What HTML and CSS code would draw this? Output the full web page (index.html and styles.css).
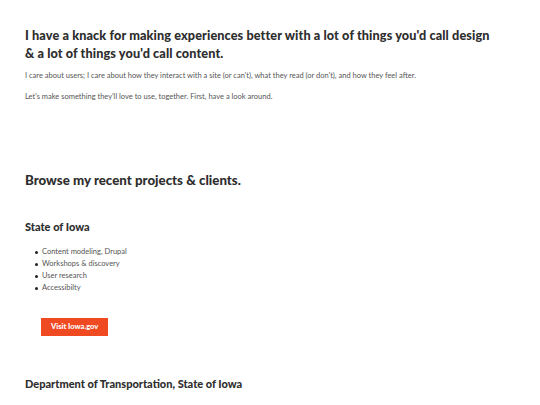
FILE: index.html
```html
<!DOCTYPE html>
<html>
<head>
<meta charset="utf-8">
<link rel="stylesheet" href="styles.css">
</head>
<body>
<main class="page">
  <section class="intro">
    <h1 class="lead">I have a knack for making experiences better with a lot of things you'd call design &amp; a lot of things you'd call content.</h1>
    <p class="copy">I care about users; I care about how they interact with a site (or can't), what they read (or don't), and how they feel after.</p>
    <p class="copy">Let's make something they'll love to use, together. First, have a look around.</p>
  </section>
  <section class="projects">
    <h2 class="section-title">Browse my recent projects &amp; clients.</h2>
    <article class="project">
      <h3 class="project-title">State of Iowa</h3>
      <ul class="tags">
        <li>Content modeling, Drupal</li>
        <li>Workshops &amp; discovery</li>
        <li>User research</li>
        <li>Accessibilty</li>
      </ul>
      <a class="btn" href="#">Visit Iowa.gov</a>
    </article>
    <article class="project">
      <h3 class="project-title">Department of Transportation, State of Iowa</h3>
      <ul class="tags">
        <li>Information architecture</li>
        <li>Content strategy</li>
      </ul>
    </article>
  </section>
</main>
</body>
</html>
```
FILE: styles.css
```css
html, body { margin: 0; padding: 0; background: #fff; }
body { font-family: Lato, sans-serif; color: #2e2e2e; }
.page { padding: 26px 25px 0 25px; }
.lead {
  margin: 0;
  font-size: 12.7px;
  line-height: 18px;
  font-weight: 900;
  letter-spacing: 0.1px;
  color: #2e2e2e;
  max-width: 470px;
}
.copy {
  margin: 8px 0 0 0;
  font-size: 7.5px;
  line-height: 11px;
  color: #555;
}
.copy + .copy { margin-top: 10px; }
.projects { margin-top: 70px; }
.section-title {
  margin: 0;
  font-size: 13.3px;
  line-height: 16px;
  font-weight: 900;
}
.project { margin-top: 32px; }
.project + .project { margin-top: 41px; }
.project-title {
  margin: 0;
  font-size: 11px;
  line-height: 14px;
  font-weight: 900;
}
.tags {
  list-style: none;
  margin: 12px 0 0 0;
  padding-left: 10px;
  font-size: 7.5px;
  line-height: 12px;
  color: #555;
}
.tags li {
  display: flex;
  align-items: center;
  gap: 4px;
  height: 12px;
}
.tags li::before {
  content: "";
  width: 3px;
  height: 3px;
  border-radius: 50%;
  background: #222;
  flex: none;
}
.btn {
  display: inline-block;
  margin: 24px 0 0 16px;
  padding: 0 10px;
  height: 18px;
  line-height: 18px;
  background: #f04a23;
  color: #fff;
  font-size: 7.5px;
  font-weight: 900;
  text-decoration: none;
}
```
